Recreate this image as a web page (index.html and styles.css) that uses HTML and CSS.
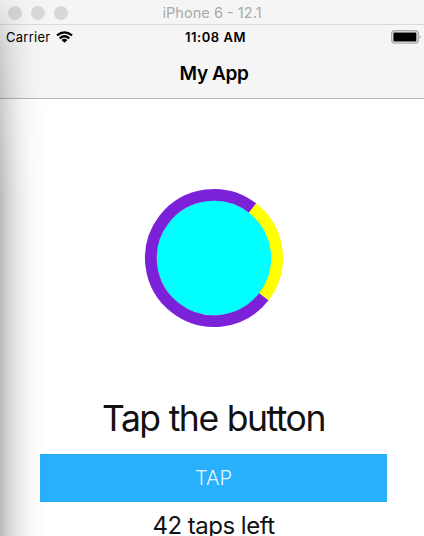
FILE: index.html
```html
<!DOCTYPE html>
<html lang="en">
<head>
<meta charset="utf-8">
<title>My App</title>
<link rel="stylesheet" href="styles.css">
</head>
<body>
<div class="simulator">
  <header class="titlebar">
    <div class="lights"><i></i><i></i><i></i></div>
    <span class="device">iPhone 6 - 12.1</span>
  </header>
  <div class="navigation">
    <div class="status">
      <div class="carrier"><span>Carrier</span>
        <svg class="wifi" viewBox="0 0 17 12" width="17" height="12"><path d="M1 4.4Q8.5-1.8 16 4.4M3.7 7.3Q8.5 3.2 13.3 7.3" fill="none" stroke="#000" stroke-width="2.2"/><path d="M5.5 9Q8.5 6.5 11.5 9L8.5 11.8Z"/></svg>
      </div>
      <span class="time">11:08 AM</span>
      <svg class="battery" viewBox="0 0 31 14" width="31" height="14"><rect x=".7" y=".7" width="26.6" height="12.4" rx="3" fill="#f5f5f5" stroke="#aaa" stroke-width="1.4"/><rect x="2.4" y="2.4" width="23" height="9" rx="1"/><path d="M28.6 5Q30.5 7 28.6 9Z" fill="#888"/></svg>
    </div>
    <h1 class="title">My App</h1>
  </div>
  <main class="content">
    <svg class="ring" viewBox="-70 -70 140 140" width="140" height="140"><circle r="57.5" fill="#0ff"/><g fill="none" stroke-width="11.8"><path d="M38.6-49.9A63.1 63.1 0 1 0 49.9 38.6" stroke="#7b22d9"/><path d="M38.6-49.9A63.1 63.1 0 0 1 49.9 38.6" stroke="#ff0"/></g></svg>
    <p class="prompt">Tap the button</p>
    <button class="tap"><span>TAP</span></button>
    <p class="count">42 taps left</p>
  </main>
  <div class="shade"></div>
</div>
</body>
</html>
```
FILE: styles.css
```css
* { box-sizing: border-box; }
body { margin: 0; overflow: hidden; background: #fff; }
.simulator {
  position: relative;
  width: 424px;
  height: 536px;
  overflow: hidden;
  display: flex;
  flex-direction: column;
  font-family: Inter, "Liberation Sans", sans-serif;
  color: #111;
}
.titlebar {
  height: 25px;
  flex: none;
  display: grid;
  grid-template-columns: 1fr auto 1fr;
  align-items: center;
  background: #f5f5f5;
  border-bottom: 1px solid #dadada;
}
.lights { display: flex; gap: 9px; padding: 1px 0 0 8px; }
.lights i { width: 14px; height: 14px; border-radius: 50%; background: #d8d8d8; }
.device { padding-top: 2px; font-size: 14.6px; line-height: 20px; color: #aaa; white-space: nowrap; }
.navigation { height: 74px; flex: none; background: #f5f5f5; border-bottom: 1px solid #b9b9b9; }
.status {
  height: 24px;
  display: grid;
  grid-template-columns: 1fr auto 1fr;
  align-items: center;
  padding: 0 2px 0 6px;
  font-size: 13px;
  color: #000;
}
.carrier { display: flex; align-items: center; gap: 6px; letter-spacing: .25px; }
.time { padding-left: 3px; font-weight: 600; letter-spacing: .5px; }
.battery { justify-self: end; }
.title { margin: 13px 0 0; padding-left: 4px; text-align: center; font-size: 19px; line-height: 24px; font-weight: 600; letter-spacing: -.4px; color: #000; }
.content { display: flex; flex-direction: column; align-items: center; padding-left: 3px; }
.ring { margin-top: 89px; }
.prompt { margin: 69px 0 0; font-size: 35.5px; line-height: 44px; letter-spacing: -1.45px; word-spacing: .5px; white-space: nowrap; }
.tap {
  width: 347px;
  height: 48px;
  margin: 13px 0 0;
  padding: 0;
  border: 0;
  background: #29b0fd;
  color: #e5f7ff;
  font: 300 20px/49px Inter, "Liberation Sans", sans-serif;
}
.count { margin: 9px 0 0; font-size: 24px; line-height: 30px; letter-spacing: -.5px; white-space: nowrap; }
.shade {
  position: absolute;
  inset: 0 auto 0 0;
  width: 46px;
  pointer-events: none;
  background: linear-gradient(90deg, rgba(0,0,8,.27), rgba(0,0,5,.18) 17%, rgba(0,0,0,.08) 42%, rgba(0,0,0,.025) 68%, transparent);
  -webkit-mask-image: linear-gradient(rgba(0,0,0,.15), rgba(0,0,0,.6) 50px, #000 200px);
  mask-image: linear-gradient(rgba(0,0,0,.15), rgba(0,0,0,.6) 50px, #000 200px);
}
```
